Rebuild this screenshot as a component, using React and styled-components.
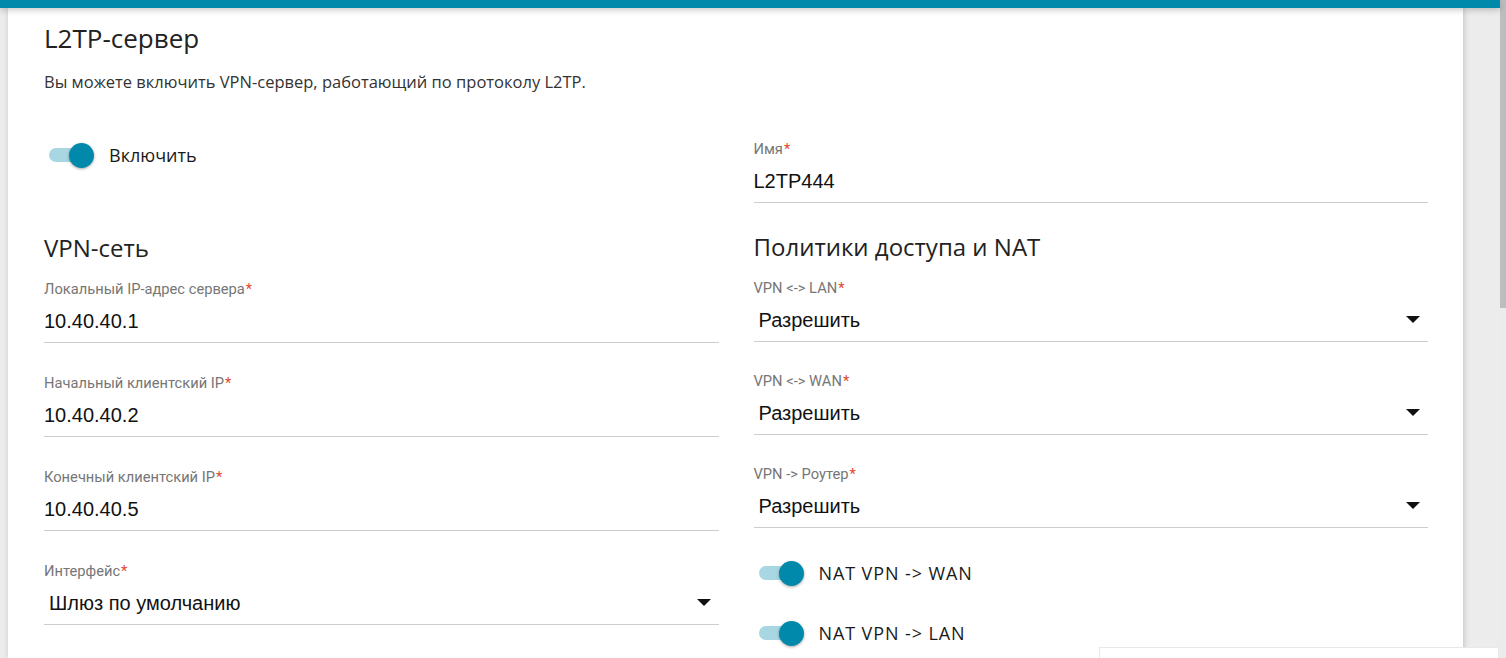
import React from "react";
import styled, { createGlobalStyle } from "styled-components";

const GlobalStyle = createGlobalStyle`
  html, body {
    margin: 0;
    padding: 0;
    height: 100%;
    overflow: hidden;
    background: #ececec;
  }
  #root { height: 100%; }
  * { box-sizing: border-box; }
`;

const TEAL = "#0089ab";

const Shell = styled.div`
  display: flex;
  height: 100vh;
`;

const Main = styled.div`
  flex: 1;
  display: flex;
  flex-direction: column;
  min-width: 0;
`;

const TopBar = styled.div`
  height: 8px;
  flex: none;
  background: ${TEAL};
  box-shadow: 0 2px 6px rgba(0, 0, 0, 0.22);
  position: relative;
  z-index: 2;
`;

const Workspace = styled.div`
  flex: 1;
  display: flex;
  background: #ececec;
  min-height: 0;
`;

const Card = styled.main`
  margin-left: 8px;
  width: 1455px;
  flex: none;
  background: #fff;
  box-shadow: 1px 0 6px rgba(0, 0, 0, 0.18);
  padding: 12px 35px 0 36px;
  position: relative;
  z-index: 1;
`;

const ScrollTrack = styled.div`
  width: 6px;
  flex: none;
  background: #ebebeb;
  display: flex;
  flex-direction: column;
`;

const ScrollThumb = styled.div`
  height: 308px;
  background: #bdbdbd;
`;

const Title = styled.h1`
  margin: 0;
  font-family: "Open Sans", sans-serif;
  font-weight: 400;
  font-size: 26px;
  line-height: 36px;
  color: #222;
`;

const Intro = styled.p`
  margin: 15px 0 0;
  font-family: "Open Sans", sans-serif;
  font-size: 16.5px;
  line-height: 22px;
  color: #333;
`;

const Columns = styled.div`
  margin-top: 47px;
  display: grid;
  grid-template-columns: 1fr 1fr;
  column-gap: 35px;
  align-items: start;
`;

const Column = styled.div`
  display: flex;
  flex-direction: column;
`;

const SectionTitle = styled.h2`
  margin: ${(p) => p.$top ?? 30}px 0 17px;
  font-family: "Open Sans", sans-serif;
  font-weight: 400;
  font-size: 24px;
  line-height: 30px;
  color: #222;
`;

const SwitchRow = styled.label`
  display: flex;
  align-items: center;
  height: 26px;
  margin-top: ${(p) => p.$top || 0}px;
  padding-left: 5px;
  gap: 16px;
  cursor: pointer;
`;

const Track = styled.span`
  position: relative;
  width: 44px;
  height: 14px;
  border-radius: 7px;
  background: #a8d7e3;
  flex: none;
`;

const Knob = styled.span`
  position: absolute;
  right: -1px;
  top: 50%;
  width: 25px;
  height: 25px;
  margin-top: -12.5px;
  border-radius: 50%;
  background: ${TEAL};
  box-shadow: 0 1px 3px rgba(0, 0, 0, 0.35);
`;

const SwitchText = styled.span`
  font-family: "Open Sans", sans-serif;
  font-size: 18px;
  letter-spacing: ${(p) => p.$spacing || 0}px;
  color: #1a1a1a;
`;

const Field = styled.div`
  display: flex;
  flex-direction: column;
  margin-bottom: ${(p) => (p.$last ? 0 : p.$gap ?? 31)}px;
`;

const Label = styled.span`
  font-family: Roboto, sans-serif;
  font-size: 14.7px;
  line-height: 18px;
  color: #767676;
`;

const Required = styled.span`
  color: #e4472b;
  margin-left: 1px;
`;

const ValueLine = styled.div`
  display: flex;
  align-items: center;
  justify-content: space-between;
  padding: 11px ${(p) => (p.$select ? "8px" : "0")} 9px
    ${(p) => (p.$select ? "5px" : "0")};
  border-bottom: 1px solid #cdcdcd;
  font-family: "Liberation Sans", Arial, sans-serif;
  font-size: 20px;
  line-height: 24px;
  color: #111;
`;

const Caret = styled.span`
  width: 0;
  height: 0;
  border-left: 7px solid transparent;
  border-right: 7px solid transparent;
  border-top: 7px solid #111;
  margin-top: -2px;
`;

const Toast = styled.div`
  position: fixed;
  left: 1099px;
  top: 647px;
  width: 400px;
  height: 60px;
  background: #fff;
  border: 1px solid #e8e8e8;
  z-index: 5;
`;

function Switch({ children, top, spacing }) {
  return (
    <SwitchRow $top={top}>
      <Track>
        <Knob />
      </Track>
      <SwitchText $spacing={spacing}>{children}</SwitchText>
    </SwitchRow>
  );
}

function TextField({ label, value, gap, last }) {
  return (
    <Field $gap={gap} $last={last}>
      <Label>
        {label}
        <Required>*</Required>
      </Label>
      <ValueLine>{value}</ValueLine>
    </Field>
  );
}

function SelectField({ label, value, gap, last }) {
  return (
    <Field $gap={gap} $last={last}>
      <Label>
        {label}
        <Required>*</Required>
      </Label>
      <ValueLine $select>
        <span>{value}</span>
        <Caret />
      </ValueLine>
    </Field>
  );
}

export default function App() {
  return (
    <>
      <GlobalStyle />
      <Shell>
        <Main>
          <TopBar />
          <Workspace>
            <Card>
              <Title>L2TP-сервер</Title>
              <Intro>
                Вы можете включить VPN-сервер, работающий по протоколу L2TP.
              </Intro>
              <Columns>
                <Column>
                  <Switch top={2}>Включить</Switch>
                  <SectionTitle $top={65}>VPN-сеть</SectionTitle>
                  <TextField label="Локальный IP-адрес сервера" value="10.40.40.1" />
                  <TextField label="Начальный клиентский IP" value="10.40.40.2" />
                  <TextField label="Конечный клиентский IP" value="10.40.40.5" />
                  <SelectField label="Интерфейс" value="Шлюз по умолчанию" last />
                </Column>
                <Column>
                  <TextField label="Имя" value="L2TP444" last />
                  <SectionTitle $top={29}>Политики доступа и NAT</SectionTitle>
                  <SelectField label="VPN <-> LAN" value="Разрешить" gap={30} />
                  <SelectField label="VPN <-> WAN" value="Разрешить" gap={30} />
                  <SelectField label="VPN -> Роутер" value="Разрешить" last />
                  <Switch top={32} spacing={0.9}>NAT VPN -&gt; WAN</Switch>
                  <Switch top={34} spacing={0.9}>NAT VPN -&gt; LAN</Switch>
                </Column>
              </Columns>
            </Card>
          </Workspace>
        </Main>
        <ScrollTrack>
          <ScrollThumb />
        </ScrollTrack>
      </Shell>
      <Toast />
    </>
  );
}
